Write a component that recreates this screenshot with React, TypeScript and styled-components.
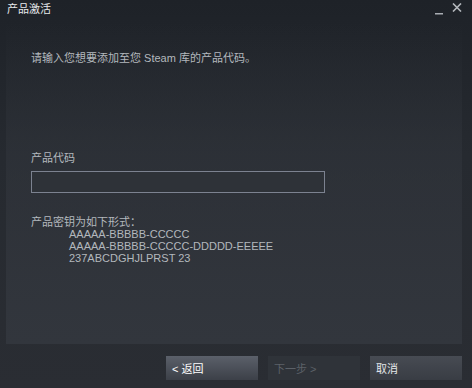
import React from "react";
import styled, { createGlobalStyle } from "styled-components";

const GlobalStyle = createGlobalStyle`
  html, body {
    margin: 0;
    padding: 0;
    background: #2a2d33;
  }
  * {
    box-sizing: border-box;
  }
`;

const keyFormats = [
  "AAAAA-BBBBB-CCCCC",
  "AAAAA-BBBBB-CCCCC-DDDDD-EEEEE",
  "237ABCDGHJLPRST 23",
];

const App: React.FC = () => {
  return (
    <>
      <GlobalStyle />
      <Window>
        <TitleBar>
          <Title>产品激活</Title>
          <WindowControls>
            <MinButton>
              <svg width="9" height="9" viewBox="0 0 9 9">
                <rect x="0" y="7" width="8" height="1.5" fill="#a9adb3" />
              </svg>
            </MinButton>
            <CloseButton>
              <svg width="10" height="9" viewBox="0 0 10 9">
                <path d="M1 0.5 L9 8.5 M9 0.5 L1 8.5" stroke="#b4b8bd" strokeWidth="1.6" />
              </svg>
            </CloseButton>
          </WindowControls>
        </TitleBar>

        <Panel>
          <Intro>请输入您想要添加至您 Steam 库的产品代码。</Intro>

          <FieldLabel>产品代码</FieldLabel>
          <CodeInput type="text" />

          <FormatTitle>产品密钥为如下形式：</FormatTitle>
          <FormatList>
            {keyFormats.map((line) => (
              <FormatLine key={line}>{line}</FormatLine>
            ))}
          </FormatList>
        </Panel>

        <Footer>
          <Button $variant="primary">&lt; 返回</Button>
          <Button $variant="disabled">下一步 &gt;</Button>
          <Button $variant="normal">取消</Button>
        </Footer>
      </Window>
    </>
  );
};

export default App;

const Window = styled.div`
  width: 472px;
  height: 388px;
  display: flex;
  flex-direction: column;
  background: linear-gradient(to bottom, #1e2228 0%, #262a30 40%, #2a2d33 100%);
  font-family: "Liberation Sans", "Noto Sans CJK SC", sans-serif;
  font-size: 11px;
  color: #b6bbc0;
  overflow: hidden;
`;

const TitleBar = styled.div`
  height: 22px;
  display: flex;
  align-items: flex-start;
  justify-content: space-between;
  padding: 2px 10px 0 7px;
`;

const Title = styled.div`
  font-size: 11px;
  line-height: 14px;
  color: #e6e9ec;
`;

const WindowControls = styled.div`
  display: flex;
  align-items: flex-start;
  gap: 8px;
  padding-top: 1px;
`;

const MinButton = styled.div`
  width: 9px;
  height: 9px;
  margin-top: 3px;
  display: flex;
`;

const CloseButton = styled.div`
  width: 10px;
  height: 9px;
  display: flex;
`;

const Panel = styled.div`
  flex: 1;
  margin: 0 10px 0 6px;
  padding: 29px 25px 0 25px;
  display: flex;
  flex-direction: column;
  align-items: flex-start;
  background: linear-gradient(to bottom, rgba(50, 54, 61, 0) 0%, rgba(50, 54, 61, 0.5) 40%, #32363d 100%);
`;

const Intro = styled.div`
  line-height: 14px;
  color: #b3b8bd;
`;

const FieldLabel = styled.div`
  margin-top: 86px;
  line-height: 14px;
  color: #b3b8bd;
`;

const CodeInput = styled.input`
  margin-top: 6px;
  width: 294px;
  height: 22px;
  border: 1px solid #7c8290;
  background: #2e3238;
  color: #e6e9ec;
  outline: none;
  padding: 0 4px;
  font: inherit;
`;

const FormatTitle = styled.div`
  margin-top: 23px;
  line-height: 12px;
  color: #b3b8bd;
`;

const FormatList = styled.div`
  padding-left: 38px;
  display: flex;
  flex-direction: column;
`;

const FormatLine = styled.div`
  line-height: 12px;
  color: #b3b8bd;
`;

const Footer = styled.div`
  height: 44px;
  display: flex;
  justify-content: flex-end;
  align-items: flex-start;
  gap: 10px;
  padding: 12px 10px 0 0;
`;

const Button = styled.div<{ $variant: "primary" | "disabled" | "normal" }>`
  width: 92px;
  height: 24px;
  display: flex;
  align-items: center;
  padding-left: 6px;
  font-size: 11px;
  color: ${(p) =>
    p.$variant === "disabled" ? "#5c6168" : p.$variant === "primary" ? "#ffffff" : "#e4e7ea"};
  background: ${(p) =>
    p.$variant === "primary"
      ? "linear-gradient(to bottom, #5b606a, #3c4048)"
      : p.$variant === "normal"
      ? "linear-gradient(to bottom, #474b53, #393d44)"
      : "#2f3339"};
`;
